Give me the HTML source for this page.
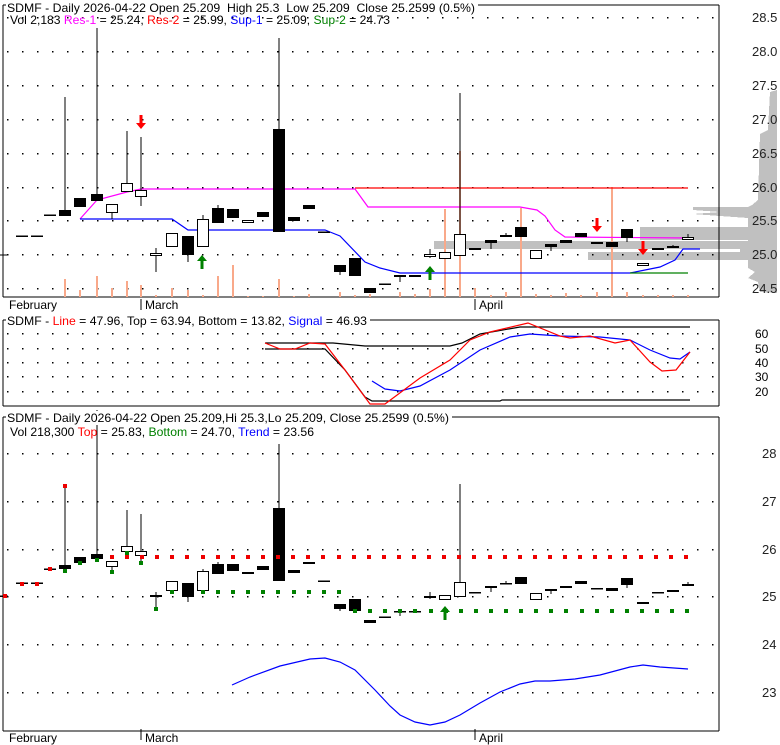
<!DOCTYPE html>
<html><head><meta charset="utf-8"><style>
html,body{margin:0;padding:0;background:#fff;width:780px;height:745px;overflow:hidden}
svg{display:block;font-family:"Liberation Sans",Arial,sans-serif;font-size:12px}
</style></head><body>
<svg id="s" width="780" height="745" xmlns="http://www.w3.org/2000/svg" shape-rendering="crispEdges">
<g id="bg"></g>
<polygon fill="#c0c0c0" points="777,90 770,92 768,130 760,134 758,200 752,205 748,207 693,207 693,210 720,212 693,214 720,216 748,218 748,227 640,227 640,240 748,240 748,241 434,241 434,249 740,249 740,252 588,252 588,260 748,260 748,268 755,272 748,278 758,282 760,292 777,293"/>
<g id="g"></g>
</svg>
<script>
var S=document.getElementById('g');var ns='http://www.w3.org/2000/svg';
function el(t,a,txt){var e=document.createElementNS(ns,t);for(var k in a)e.setAttribute(k,a[k]);if(txt!=null)e.textContent=txt;S.appendChild(e);return e}
function line(x1,y1,x2,y2,c,w){el('line',{x1:x1,y1:y1,x2:x2,y2:y2,stroke:c||'#000','stroke-width':w||1})}
function pl(p,c,w){el('polyline',{points:p,fill:'none',stroke:c,'stroke-width':w||1,'shape-rendering':'auto'})}
function dots(y,x0,x1){for(var x=x0;x<=x1;x+=15)el('rect',{x:x,y:y,width:1.5,height:1.5,fill:'#000'})}
function txt(x,y,s,a){a=a||{};a.x=x;a.y=y;el('text',a,s)}
line(3,5,719,5);line(3,5,3,297);line(719,5,719,297);line(3,297,719,297);
line(3,320,719,320);line(3,320,3,406);line(719,320,719,406);line(3,406,719,406);
line(3,417,719,417);line(3,417,3,731);line(719,417,719,731);line(3,731,719,731);
var p1=[17,51,85,119,153,187,220,254,288],lab1=['28.5','28.0','27.5','27.0','26.5','26.0','25.5','25.0','24.5'];
p1.forEach(function(y,i){dots(y,7,715);txt(752,y+5,lab1[i],{'font-size':13,fill:'#222'})});
line(0,255,7,255);
var p2=[333,348,362,376,391],lab2=['60','50','40','30','20'];
p2.forEach(function(y,i){dots(y,7,715);txt(755,y+5,lab2[i])});
var p3=[453,501,549,596,644,692],lab3=['28','27','26','25','24','23'];
p3.forEach(function(y,i){dots(y,7,715);txt(762,y+5,lab3[i],{'font-size':13,fill:'#222'})});
[[305,309],[735,742]].forEach(function(m){txt(9,m[1],'February');line(141,m[0]-6,141,m[0]+5);txt(145,m[1],'March');line(475,m[0]-6,475,m[0]+5);txt(479,m[1],'April')});
var vb=[[65,279],[80,290],[97,276],[112,288],[127,281],[141,285],[156,295],[172,288],[188,290],[203,295],[218,276],[233,265],[248,296],[263,296],[279,279],[294,296],[309,294],[340,292],[355,295],[370,294],[400,292],[415,294],[430,289],[445,209],[460,151],[475,288],[491,295],[506,292],[521,208],[536,294],[551,295],[566,293],[581,295],[597,292],[612,187],[627,292],[643,295],[658,295],[673,295],[688,295]];
vb.forEach(function(v){el('rect',{x:v[0]-1,y:v[1],width:2,height:297-v[1],fill:'#f9a98a'})});
pl('355,188 688,188','#ff0000',1.2);
pl('80,219 97,200 127,192 141,189 355,189 368,207 520,207 537,210 545,216 555,230 565,237 690,238','#ff00ff',1.2);
pl('80,219 172,219 188,230 325,230 330,232 340,236 365,262 380,268 400,273 630,273 660,267 675,260 683,249 700,249','#0000ff',1.2);
pl('630,273 688,273','#008000',1.2);
var C=[[22,236,236],[37,236,236],[50,215,215],[65,210,216,97,216,1],[80,198,207,0,0,1],[97,194,201,28,201,1],[112,204,213,204,219,0],[127,183,192,131,192,0],[141,190,197,137,206,0],[156,253,256,248,272,0],[172,233,247,0,0,0],[188,236,255,236,262,1],[203,219,247,215,247,0],[218,208,223,205,223,1],[233,209,218,0,0,1],[248,220,223,0,0,0],[263,212,217,0,0,1],[279,129,232,38,232,1],[294,217,221,0,0,1],[309,205,209,0,0,1],[324,232,232],[340,265,272,265,275,1],[355,258,276,0,0,1],[370,288,293,0,0,1],[385,284,284],[400,275,277,275,282,1],[415,275,277,0,0,1],[430,254,257,249,258,0],[445,252,259,0,0,0],[460,234,256,93,256,0],[475,248,250,0,0,1],[491,240,243,240,249,1],[506,235,237,233,237,1],[521,227,237,0,0,1],[536,250,259,0,0,0],[551,244,247,244,251,1],[566,240,243,0,0,1],[581,233,237,0,0,1],[597,242,244,0,0,1],[612,242,247,0,0,1],[627,229,238,229,242,1],[643,263,266,0,0,0],[658,248,250,0,0,1],[673,246,248,245,248,0],[688,237,240,234,240,0]];
function candle(c,f){var x=c[0],t=f(c[1]),b=f(c[2]);
 if(c.length==3){line(x-6,t,x+6,t,'#000',1.5);return}
 if(c[3])line(x,f(c[3]),x,t);if(c[4])line(x,b,x,f(c[4]));
 var h=Math.max(b-t,1.5);
 if(c[5])el('rect',{x:x-6,y:t,width:12,height:h,fill:'#000'});
 else el('rect',{x:x-5.5,y:t+0.5,width:11,height:Math.max(h-1,1),fill:'#fff',stroke:'#000','stroke-width':1});}
var id=function(y){return y};var f3=function(y){return Math.round(596-(254-y)*0.703)};
C.forEach(function(c){candle(c,id)});
function arrow(x,y,dir,col){var p=dir>0?[x-1.5,y,x+1.5,y,x+1.5,y+8,x+5,y+8,x,y+14,x-5,y+8,x-1.5,y+8]:[x-1.5,y+14,x+1.5,y+14,x+1.5,y+6,x+5,y+6,x,y,x-5,y+6,x-1.5,y+6];el('polygon',{points:p.join(' '),fill:col,'shape-rendering':'auto'})}
arrow(141,115,1,'#ff0000');arrow(597,218,1,'#ff0000');arrow(643,241,1,'#ff0000');
arrow(202,255,-1,'#008000');arrow(430,266,-1,'#008000');arrow(445,606,-1,'#008000');
line(0,596,8,596,'#000',1.5);
C.forEach(function(c){var d=c.slice();if(d[0]==65)d[3]=0;if(d[0]==97)d[3]=0;if(d[0]==279)d[3]=0;if(d[0]==460)d[3]=0;candle(d,f3)});
line(65,485,65,f3(210));line(97,410,97,f3(194));line(279,444,279,f3(129));line(460,484,460,f3(234));
el('rect',{x:63,y:484,width:4,height:4,fill:'#e00'});
function sq(x,y,c){el('rect',{x:x-2,y:y-2,width:4,height:4,fill:c})}
[[5,596],[22,584],[37,584],[50,569]].forEach(function(p){sq(p[0],p[1],'#e00')});
for(var x=112;x<=690;x+=15.1)sq(Math.round(x),557,'#e00');
[[65,571],[80,563],[97,560],[112,572],[127,553],[141,563],[156,609],[172,592],[203,592]].forEach(function(p){sq(p[0],p[1],'#008000')});
for(var x=218;x<=340;x+=15.1)sq(Math.round(x),592,'#008000');
for(var x=355;x<=690;x+=15.1)sq(Math.round(x),611,'#008000');
pl('265,343 333,343 365,346 450,346 462,343 480,334 520,327 690,327','#000',1.2);
pl('265,349 325,349 345,370 365,397 372,401 500,401 502,400 690,400','#000',1.2);
pl('372,381 385,389 400,391 420,386 450,370 480,350 510,337 530,334 560,336 600,337 630,340 650,350 670,358 680,359 690,352','#0000ff',1.2);
pl('265,343 280,349 295,349 310,343 325,344 345,370 370,404 385,404 420,378 450,360 470,340 490,332 528,323 560,336 570,338 590,336 615,343 630,340 650,362 662,371 676,370 690,352','#ff0000',1.2);
pl('232,685 250,677 280,666 310,659 325,658 340,662 355,670 375,690 390,706 400,715 415,722 430,725 445,722 460,715 480,703 500,692 520,684 535,681 550,681 575,679 600,675 630,667 643,665 660,667 688,669','#0000ff',1.2);
function ttl(x,y,len,s){el('rect',{x:x-1,y:y-11,width:len+4,height:14,fill:'#fff'});var t=el('text',{x:x,y:y,textLength:len,lengthAdjust:'spacingAndGlyphs'});t.innerHTML=s}
ttl(7,12,468,'SDMF - Daily 2026-04-22 Open 25.209&#160; High 25.3&#160; Low 25.209&#160; Close 25.2599 (0.5%)');
var t=el('text',{x:10,y:24,textLength:380,lengthAdjust:'spacingAndGlyphs'});t.innerHTML='Vol 2,183 <tspan fill="#ff00ff">Res-1</tspan> = 25.24, <tspan fill="#ff0000">Res-2</tspan> = 25.99, <tspan fill="#0000ff">Sup-1</tspan> = 25.09, <tspan fill="#008000">Sup-2</tspan> = 24.73';
ttl(7,325,360,'SDMF - <tspan fill="#ff0000">Line</tspan> = 47.96, Top = 63.94, Bottom = 13.82, <tspan fill="#0000ff">Signal</tspan> = 46.93');
ttl(7,422,442,'SDMF - Daily 2026-04-22 Open 25.209,Hi 25.3,Lo 25.209, Close 25.2599 (0.5%)');
t=el('text',{x:10,y:436,textLength:304,lengthAdjust:'spacingAndGlyphs'});t.innerHTML='Vol 218,300 <tspan fill="#ff0000">Top</tspan> = 25.83, <tspan fill="#008000">Bottom</tspan> = 24.70, <tspan fill="#0000ff">Trend</tspan> = 23.56';
</script>
</body></html>
